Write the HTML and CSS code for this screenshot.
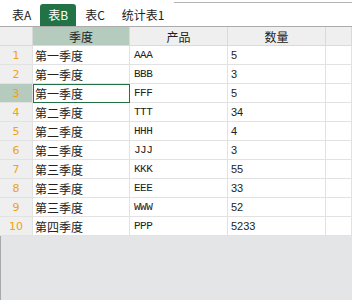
FILE: index.html
```html
<!DOCTYPE html>
<html lang="zh-CN">
<head>
    <meta charset="UTF-8">
    <title>表B</title>
    <link rel="stylesheet" href="styles.css">
</head>
<body>
    <div class="tabs">
        <span class="tab">表A</span>
        <span class="tab active">表B</span>
        <span class="tab">表C</span>
        <span class="tab">统计表1</span>
        <span class="tab-rest"></span>
    </div>
    <div class="sheet">
        <table class="grid">
            <thead>
                <tr>
                    <th class="corner"></th>
                    <th class="col1 on">季度</th>
                    <th class="col2">产品</th>
                    <th class="col3">数量</th>
                    <th class="col4"></th>
                </tr>
            </thead>
            <tbody>
                <tr><th>1</th><td>第一季度</td><td class="code">AAA</td><td class="num">5</td><td></td></tr>
                <tr><th>2</th><td>第一季度</td><td class="code">BBB</td><td class="num">3</td><td></td></tr>
                <tr><th class="on">3</th><td class="sel">第一季度</td><td class="code">FFF</td><td class="num">5</td><td></td></tr>
                <tr><th>4</th><td>第二季度</td><td class="code">TTT</td><td class="num">34</td><td></td></tr>
                <tr><th>5</th><td>第二季度</td><td class="code">HHH</td><td class="num">4</td><td></td></tr>
                <tr><th>6</th><td>第二季度</td><td class="code">JJJ</td><td class="num">3</td><td></td></tr>
                <tr><th>7</th><td>第三季度</td><td class="code">KKK</td><td class="num">55</td><td></td></tr>
                <tr><th>8</th><td>第三季度</td><td class="code">EEE</td><td class="num">33</td><td></td></tr>
                <tr><th>9</th><td>第三季度</td><td class="code">WWW</td><td class="num">52</td><td></td></tr>
                <tr><th>10</th><td>第四季度</td><td class="code">PPP</td><td class="num">5233</td><td></td></tr>
            </tbody>
        </table>
        <div class="empty"></div>
    </div>
</body>
</html>
```

FILE: styles.css
```css
html, body {
    margin: 0;
    padding: 0;
    height: 100%;
}
body {
    font-family: "Noto Sans CJK SC", sans-serif;
    font-size: 12px;
    color: #222;
    background: #fff;
    display: flex;
    flex-direction: column;
    width: 352px;
    height: 300px;
    overflow: hidden;
}
.tabs {
    display: flex;
    align-items: flex-end;
    height: 27px;
    box-sizing: border-box;
    padding-left: 4px;
    border-bottom: 1px solid #ababab;
}
.tab {
    height: 22px;
    line-height: 22px;
    padding: 0 8px;
    margin-right: 1px;
    border-radius: 3px 3px 0 0;
    color: #222;
}
.tab.active {
    background: #217346;
    color: #fff;
}
.tab-rest {
    flex: 1;
    align-self: stretch;
    margin-top: 2px;
    border-top: 1px solid #b4b4b4;
}
.sheet {
    flex: 1;
    display: flex;
    flex-direction: column;
}
.grid {
    border-collapse: collapse;
    table-layout: fixed;
    width: 352px;
}
.grid th, .grid td {
    height: 18px;
    padding: 0 0 0 2px;
    border: 1px solid #e2e2e2;
    white-space: nowrap;
    overflow: hidden;
    font-weight: normal;
    text-align: left;
}
.grid tr > :first-child {
    border-left: none;
}
.grid thead th {
    background: #efefef;
    text-align: center;
    padding: 0;
    border-top: none;
    border-color: #dadada;
}
.grid thead th.on {
    background: #b4cbbd;
}
.corner { width: 32px; }
.col1 { width: 96px; }
.col2 { width: 97px; }
.col3 { width: 97px; }
.grid tbody th {
    background: #efefef;
    color: #f0a30a;
    text-align: center;
    padding: 0;
    font-family: "DejaVu Sans", sans-serif;
    font-size: 11px;
}
.grid tbody th.on {
    background: #b4cbbd;
}
.grid td.code {
    padding-left: 4px;
    font-family: "Liberation Mono", monospace;
    font-size: 11px;
    letter-spacing: -0.5px;
}
.grid td.num {
    padding-left: 3px;
    font-family: "Liberation Sans", sans-serif;
    font-size: 11px;
}
.grid td.sel {
    outline: 1px solid #217346;
    outline-offset: -1px;
}
.empty {
    flex: 1;
    background: #e4e5e7;
    border-left: 1px solid #a8a8a8;
}
```
